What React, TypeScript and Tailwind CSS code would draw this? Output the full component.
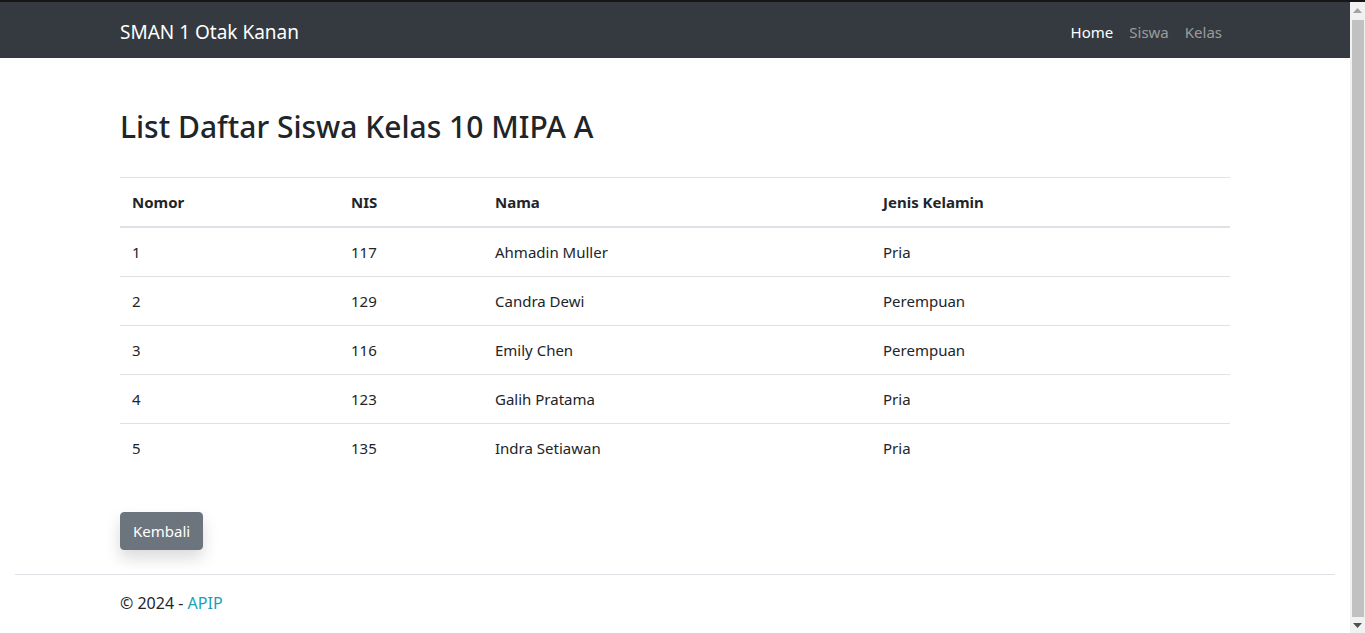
const students = [
  { no: 1, nis: "117", nama: "Ahmadin Muller", jk: "Pria" },
  { no: 2, nis: "129", nama: "Candra Dewi", jk: "Perempuan" },
  { no: 3, nis: "116", nama: "Emily Chen", jk: "Perempuan" },
  { no: 4, nis: "123", nama: "Galih Pratama", jk: "Pria" },
  { no: 5, nis: "135", nama: "Indra Setiawan", jk: "Pria" },
];

// browser scrollbar strip as seen in the screenshot
function Scrollbar() {
  return (
    <div className="w-[15px] shrink-0 bg-[#f1f1f1] flex flex-col">
      <div className="h-[17px] flex items-center justify-center">
        <svg width="9" height="5" viewBox="0 0 9 5"><path d="M0 5 L4.5 0 L9 5 Z" fill="#a3a3a3" /></svg>
      </div>
      <div className="flex-1 w-[12px] ml-[2px] bg-[#c1c1c1] mt-px" />
      <div className="h-[16px] flex items-center justify-center">
        <svg width="9" height="5" viewBox="0 0 9 5"><path d="M0 0 L9 0 L4.5 5 Z" fill="#505050" /></svg>
      </div>
    </div>
  );
}

export default function App() {
  return (
    <div className="h-[633px] overflow-hidden flex flex-col bg-white text-[#212529] font-['Noto_Sans',sans-serif] text-[15px]">
      <div className="h-[2px] shrink-0 bg-[#161616]" />
      <div className="flex-1 flex min-h-0">
        <div className="w-[1350px] shrink-0 flex flex-col">
          <nav className="bg-[#343a40]">
            <div className="mx-auto w-[1140px] px-[15px] h-14 pt-1 flex items-center justify-between">
              <a href="#" className="text-white text-[19px] leading-[30px]">SMAN 1 Otak Kanan</a>
              <ul className="flex">
                <li><a href="#" className="block px-2 py-2 leading-6 text-white">Home</a></li>
                <li><a href="#" className="block px-2 py-2 leading-6 text-white/50">Siswa</a></li>
                <li><a href="#" className="block px-2 py-2 leading-6 text-white/50">Kelas</a></li>
              </ul>
            </div>
          </nav>

          <main className="mx-auto w-[1140px] px-[15px] pt-[50px]">
            <h2 className="text-[30px] font-medium leading-[38px] mb-[31px]">List Daftar Siswa Kelas 10 MIPA A</h2>
            <table className="w-full border-collapse text-left">
              <thead>
                <tr>
                  <th className="w-[219px] p-3 leading-6 font-bold border-t border-b-2 border-[#dee2e6]">Nomor</th>
                  <th className="w-[144px] p-3 leading-6 font-bold border-t border-b-2 border-[#dee2e6]">NIS</th>
                  <th className="w-[388px] p-3 leading-6 font-bold border-t border-b-2 border-[#dee2e6]">Nama</th>
                  <th className="p-3 leading-6 font-bold border-t border-b-2 border-[#dee2e6]">Jenis Kelamin</th>
                </tr>
              </thead>
              <tbody>
                {students.map((s) => (
                  <tr key={s.no}>
                    <td className="p-3 leading-6 border-t border-[#dee2e6]">{s.no}</td>
                    <td className="p-3 leading-6 border-t border-[#dee2e6]">{s.nis}</td>
                    <td className="p-3 leading-6 border-t border-[#dee2e6]">{s.nama}</td>
                    <td className="p-3 leading-6 border-t border-[#dee2e6]">{s.jk}</td>
                  </tr>
                ))}
              </tbody>
            </table>
            <button className="mt-10 bg-[#6c757d] text-white text-[15px] rounded px-3 py-1.5 leading-6 border border-[#6c757d] shadow-[0_8px_16px_rgba(0,0,0,0.15)]">
              Kembali
            </button>
          </main>

          <footer className="mx-[15px] mt-6 border-t border-[#dee2e6] pt-4 pb-6">
            <div className="mx-auto w-[1140px] px-[15px] leading-6 text-base">
              © 2024 - <a href="#" className="text-[#17a2b8]">APIP</a>
            </div>
          </footer>
        </div>
        <Scrollbar />
      </div>
    </div>
  );
}
